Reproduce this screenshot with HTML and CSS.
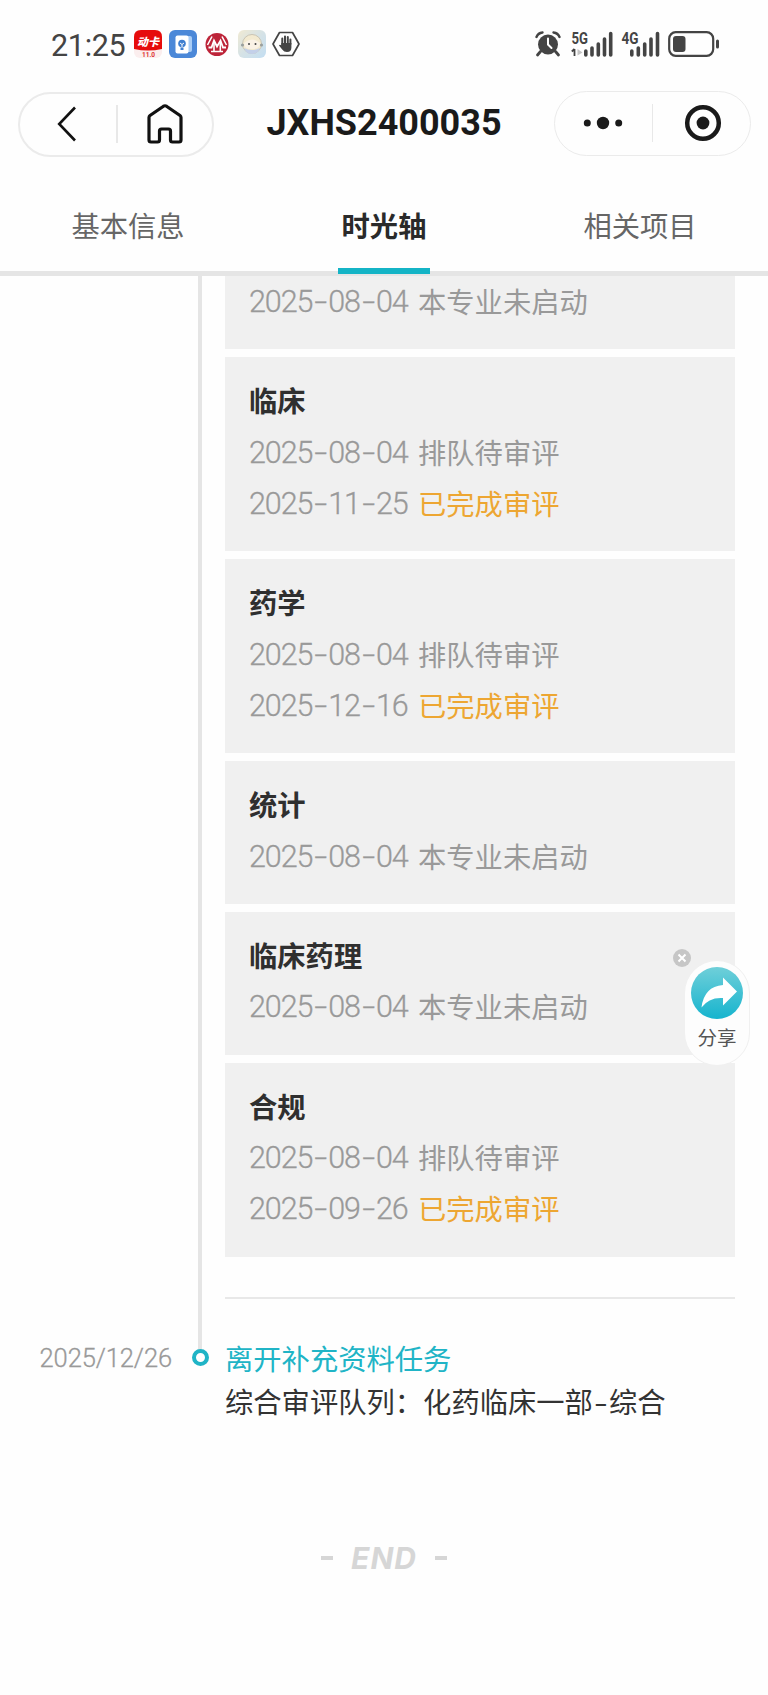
FILE: index.html
```
<!DOCTYPE html>
<html lang="zh-CN">
  <head>
    <meta charset="UTF-8" />
    <meta name="viewport" content="width=device-width, initial-scale=1.0" />
    <title>JXHS2400035</title>
    <link rel="stylesheet" href="styles.css" />
  </head>
  <body>
    <div class="status-bar">
      <div class="status-left">
        <span class="time">21:25</span>
        <svg class="app-icon" width="28" height="28" viewBox="0 0 28 28">
          <rect width="28" height="28" rx="6" fill="#fbeeee" />
          <path d="M0 19V7Q0 0 7 0H21Q28 0 28 7V19Q14 22 0 19Z" fill="#e60c0c" />
          <text class="card-name" x="14" y="15.5" text-anchor="middle">动卡</text>
          <text class="card-version" x="14.5" y="26.5" text-anchor="middle">11.0</text>
        </svg>
        <svg class="app-icon" width="28" height="28" viewBox="0 0 28 28">
          <rect width="28" height="28" rx="6" fill="#4b88d8" />
          <rect x="11" y="6" width="12" height="16" rx="2" fill="#a9cdf6" />
          <rect x="6.500" y="5.500" width="13" height="18" rx="2" fill="#fff" />
          <circle cx="13" cy="13.500" r="3.800" fill="#3f7fd0" />
          <path d="M11.500 17.500h3v2.500h-3z" fill="#3f7fd0" />
          <path d="M11 13l2 1.500 2-1.500M13 14.500V17" stroke="#fff" fill="none" />
        </svg>
        <svg class="app-icon" width="28" height="28" viewBox="0 0 28 28">
          <circle cx="14" cy="14.500" r="11.500" fill="#bd2439" />
          <path d="M5.500 17.500H8.500L11 10.500 14 16.500 17.500 10.500 20 17.500H23" fill="none" stroke="#fff" stroke-width="1.800" />
          <path d="M9 6.500L4.500 15M19 6.500L23.500 15M11 12.500V21.500M17.300 12.500V21.500M8 21.500h12" fill="none" stroke="#fff" stroke-width="1.600" />
        </svg>
        <svg class="app-icon" width="28" height="28" viewBox="0 0 28 28">
          <defs>
            <linearGradient id="faceBg" x1="0" y1="0" x2="1" y2="1">
              <stop offset="0" stop-color="#f1ead2" />
              <stop offset="0.500" stop-color="#d5e2e6" />
              <stop offset="1" stop-color="#c3def2" />
            </linearGradient>
          </defs>
          <rect width="28" height="28" rx="6" fill="url(#faceBg)" />
          <circle cx="14" cy="14" r="9.500" fill="#f3ead0" stroke="#c2bba9" stroke-width="0.800" />
          <circle cx="4.500" cy="15" r="1.600" fill="#9ba09e" />
          <circle cx="23.500" cy="15" r="1.600" fill="#9ba09e" />
          <path d="M6 13Q14 6 22 13Q22 19 14 19T6 13Z" fill="#faf2e6" />
          <path d="M6 18q8 4 16 0-2 6-8 6t-8-6z" fill="#c3d0e9" />
          <circle cx="11" cy="14" r="1" fill="#444" />
          <circle cx="17.500" cy="14" r="1" fill="#444" />
        </svg>
        <svg class="app-icon" width="28" height="28" viewBox="0 0 28 28">
          <path d="M7.500 2.500h13L27 14l-6.500 11.500h-13L1 14z" fill="none" stroke="#444" stroke-width="1.700" stroke-linejoin="round" />
          <path d="M10.300 15V8.500M13 13V6.500M15.800 13V7M18.400 14V9.500" stroke="#444" stroke-width="2" stroke-linecap="round" />
          <path d="M9.300 13h10.100v4.500q0 4.500-4.400 4.500-3 0-4.800-2.500L7 15.500q.500-1.500 2.300-.300z" fill="#444" />
        </svg>
      </div>
      <div class="status-right">
        <svg class="alarm" width="26" height="26" viewBox="0 0 26 26">
          <circle cx="13" cy="13.500" r="10" fill="#444" />
          <path d="M1.500 6Q3 2 7.500 1.500M18.500 1.500Q23 2 24.500 6" fill="none" stroke="#444" stroke-width="2.400" stroke-linecap="round" />
          <path d="M5.500 20.500L2.500 24M20.500 20.500l3 3.500" stroke="#444" stroke-width="2.800" stroke-linecap="round" />
          <path d="M13 7.500V13.500l3.500 3.500" fill="none" stroke="#fff" stroke-width="2" stroke-linecap="round" />
        </svg>
        <svg class="signal" width="42" height="30" viewBox="0 -4 42 30">
          <text x="0.500" y="12.500" textLength="16.500" lengthAdjust="spacingAndGlyphs">5G</text>
          <path d="M3.500 18v7M.800 20.500l2.700-2.500" stroke="#444" stroke-width="1.800" />
          <path d="M6.500 18l5 3.500-5 3z" fill="#c4c4c4" />
          <path d="M14.800 20v4M21 17v7M27.300 13v11M33.500 8V24M39.700 2.500v21.500" stroke="#444" stroke-width="3.600" stroke-linecap="round" />
        </svg>
        <svg class="signal" width="39" height="30" viewBox="0 -4 39 30">
          <text x="0.500" y="12.500" textLength="17" lengthAdjust="spacingAndGlyphs">4G</text>
          <path d="M10.800 20v4M17.300 17v7M23.700 13v11M30 8V24M36.500 2.500v21.500" stroke="#444" stroke-width="3.600" stroke-linecap="round" />
        </svg>
        <svg width="52" height="26" viewBox="0 0 52 26">
          <rect x="1.200" y="1.200" width="44" height="23.600" rx="6.500" fill="none" stroke="#444" stroke-width="2.200" />
          <rect x="5" y="5" width="12.500" height="16" rx="3" fill="#444" />
          <path d="M49.500 10v6" stroke="#444" stroke-width="3" stroke-linecap="round" />
        </svg>
      </div>
    </div>

    <div class="nav-bar">
      <div class="capsule capsule-left">
        <svg width="20" height="36" viewBox="0 0 20 36">
          <path d="M18 1.500L2.200 18 18 34.500" fill="none" stroke="#111" stroke-width="2.600" />
        </svg>
        <span class="capsule-line"></span>
        <svg width="38" height="40" viewBox="0 0 38 40">
          <path d="M3 13.500Q3 12.300 4 11.500L17.500 2.200Q19 1.300 20.500 2.200L34 11.500Q35 12.300 35 13.500V36Q35 38 33 38H26.500Q24.500 38 24.500 36V27Q24.500 25 22.500 25H15.500Q13.500 25 13.500 27V36Q13.500 38 11.500 38H5Q3 38 3 36Z" fill="none" stroke="#111" stroke-width="3.200" stroke-linejoin="round" />
        </svg>
      </div>
      <h1>JXHS2400035</h1>
      <div class="capsule capsule-right">
        <svg width="40" height="14" viewBox="0 0 40 14">
          <circle cx="4.300" cy="7" r="3.500" fill="#1a1a1a" />
          <circle cx="20" cy="7" r="6.200" fill="#1a1a1a" />
          <circle cx="35.700" cy="7" r="3.500" fill="#1a1a1a" />
        </svg>
        <span class="capsule-line"></span>
        <svg width="38" height="38" viewBox="0 0 38 38">
          <circle cx="19" cy="19" r="15.800" fill="none" stroke="#1a1a1a" stroke-width="4.500" />
          <circle cx="19" cy="19" r="6.400" fill="#1a1a1a" />
        </svg>
      </div>
    </div>

    <div class="tabs">
      <div class="tab">基本信息</div>
      <div class="tab active">时光轴</div>
      <div class="tab">相关项目</div>
    </div>

    <div class="timeline">
      <div class="timeline-item">
        <div class="item-date"></div>
        <div class="item-axis"></div>
        <div class="item-body">
          <div class="card card-cut">
            <p><span class="date">2025<i>-</i>08<i>-</i>04</span>本专业未启动</p>
          </div>
          <div class="card">
            <h2>临床</h2>
            <p><span class="date">2025<i>-</i>08<i>-</i>04</span>排队待审评</p>
            <p><span class="date">2025<i>-</i>11<i>-</i>25</span><span class="done">已完成审评</span></p>
          </div>
          <div class="card">
            <h2>药学</h2>
            <p><span class="date">2025<i>-</i>08<i>-</i>04</span>排队待审评</p>
            <p><span class="date">2025<i>-</i>12<i>-</i>16</span><span class="done">已完成审评</span></p>
          </div>
          <div class="card">
            <h2>统计</h2>
            <p><span class="date">2025<i>-</i>08<i>-</i>04</span>本专业未启动</p>
          </div>
          <div class="card">
            <h2>临床药理</h2>
            <p><span class="date">2025<i>-</i>08<i>-</i>04</span>本专业未启动</p>
          </div>
          <div class="card">
            <h2>合规</h2>
            <p><span class="date">2025<i>-</i>08<i>-</i>04</span>排队待审评</p>
            <p><span class="date">2025<i>-</i>09<i>-</i>26</span><span class="done">已完成审评</span></p>
          </div>
          <hr />
        </div>
      </div>
      <div class="timeline-item last">
        <div class="item-date">2025/12/26</div>
        <div class="item-axis"><span class="dot"></span></div>
        <div class="item-body">
          <h3>离开补充资料任务</h3>
          <p class="queue">综合审评队列：化药临床一部<i>-</i>综合</p>
        </div>
      </div>
    </div>

    <div class="end"><span class="end-dash"></span>END<span class="end-dash"></span></div>

    <div class="share">
      <svg class="share-close" width="18" height="18" viewBox="0 0 18 18">
        <circle cx="9" cy="9" r="9" fill="#c6c6c6" />
        <path d="M5.500 5.500l7 7M12.500 5.500l-7 7" stroke="#fff" stroke-width="2" />
      </svg>
      <svg width="52" height="52" viewBox="0 0 52 52">
        <defs>
          <linearGradient id="shareBg" x1="0" y1="0" x2="0" y2="1">
            <stop offset="0" stop-color="#6fcfd9" />
            <stop offset="1" stop-color="#16b4ce" />
          </linearGradient>
        </defs>
        <circle cx="26" cy="26" r="26" fill="url(#shareBg)" />
        <path d="M32 10.500L46 24.500 32 38.500V31Q18 30 10.500 40.500Q13 19.500 32 18Z" fill="#fff" />
      </svg>
      <span>分享</span>
    </div>
  </body>
</html>
```

FILE: styles.css
```
* {
  box-sizing: border-box;
}
body {
  position: relative;
  margin: 0;
  height: 1695px;
  overflow: hidden;
  background-color: #fefefe;
  color: #333;
  font-family: "Noto Sans CJK SC", sans-serif;
  font-size: 28.3px;
}
h1,
h2,
h3,
p {
  margin: 0;
}
svg {
  display: block;
  flex: none;
}

/* status bar */
.status-bar {
  display: flex;
  justify-content: space-between;
  align-items: center;
  height: 88px;
  padding: 0 48px 0 51px;
}
.status-left,
.status-right {
  display: flex;
  align-items: center;
}
.status-left {
  gap: 6.500px;
}
.status-right {
  gap: 8px;
}
.alarm {
  margin-right: 2px;
}
.time {
  width: 76.500px;
  margin-top: 2px;
  color: #444;
  font-family: Roboto, sans-serif;
  font-size: 30.500px;
  letter-spacing: -0.300px;
}
.card-name {
  fill: #fff;
  font-size: 11px;
  font-weight: 900;
  font-style: italic;
}
.card-version {
  fill: #d33;
  font-family: Roboto, sans-serif;
  font-size: 6.500px;
  font-weight: 700;
}
.signal {
  margin-top: -4px;
}
.signal text {
  fill: #444;
  font-family: Roboto, sans-serif;
  font-size: 17px;
  font-weight: 700;
}

/* title bar */
.nav-bar {
  display: flex;
  justify-content: space-between;
  align-items: center;
  height: 72px;
  padding: 0 17px 0 18px;
}
.nav-bar h1 {
  color: #1a1a1a;
  font-family: Roboto, sans-serif;
  font-size: 36px;
  font-weight: 700;
  line-height: 72px;
  margin-top: -3px;
}
.capsule {
  display: flex;
  align-items: center;
  height: 65px;
  border: 2px solid #ebebeb;
  border-radius: 33px;
}
.capsule-left {
  width: 196px;
  padding-left: 37px;
}
.capsule-right {
  width: 197px;
  border-width: 1px;
  padding-left: 28px;
  margin-top: -2px;
}
.capsule-line {
  width: 2px;
  height: 38px;
  background-color: #e8e8e8;
}
.capsule-left .capsule-line {
  margin: 0 28px 0 39px;
}
.capsule-right .capsule-line {
  width: 1px;
  margin: 0 31px 0 29px;
}

/* tabs */
.tabs {
  display: flex;
  height: 116px;
  border-bottom: 5px solid #e5e5e5;
}
.tab {
  position: relative;
  flex: 1;
  color: #666;
  line-height: 130px;
  text-align: center;
}
.tab.active {
  color: #2a2a2a;
  font-weight: 700;
}
.tab.active::after {
  content: "";
  position: absolute;
  left: 50%;
  bottom: -3px;
  width: 92px;
  height: 6px;
  margin-left: -46px;
  background-color: #14b4c6;
}

/* timeline */
.timeline-item {
  display: grid;
  grid-template-columns: 198px 4px 510px;
}
.timeline-item .item-body {
  margin-left: 23px;
  width: 510px;
}
.item-axis {
  background-color: #e5e5e5;
}
.card {
  margin-bottom: 8.400px;
  padding: 17px 24px 23px;
  background-color: #f0f0f0;
  line-height: 51.200px;
}
.card-cut {
  padding-top: 0;
  height: 73px;
  line-height: 50px;
}
.card h2 {
  font-size: 28.300px;
  font-weight: 700;
  color: #2f2f2f;
}
.card p {
  display: flex;
  color: #999;
}
.date {
  width: 169px;
  padding-top: 1px;
  margin-bottom: -1px;
  font-family: Roboto, sans-serif;
  font-size: 30.500px;
  font-weight: 300;
  letter-spacing: -1.100px;
  -webkit-text-stroke: 0.300px #999;
}
.date i {
  display: inline-block;
  width: 16px;
  font-style: normal;
  text-align: center;
  transform: scaleX(1.5);
}
.done {
  color: #eda632;
}
hr {
  height: 2px;
  margin: 40px 0 0;
  border: none;
  background-color: #e8e8e8;
}
.timeline-item > .item-body:has(hr) {
  padding-bottom: 37px;
}
.last .item-axis {
  background: linear-gradient(#e5e5e5, #e5e5e5) no-repeat 0 0 / 4px 16px;
}
.last .item-date {
  padding: 2px 26px 0 0;
  color: #999;
  font-family: Roboto, sans-serif;
  font-size: 25.500px;
  font-weight: 300;
  letter-spacing: -0.100px;
  line-height: 40px;
  text-align: right;
  white-space: nowrap;
  -webkit-text-stroke: 0.300px #999;
}
.dot {
  display: block;
  width: 17px;
  height: 17px;
  margin: 13px 0 0 -6.500px;
  border: 4px solid #20b4c6;
  border-radius: 50%;
  background-color: #fff;
}
.last h3 {
  color: #20b4c6;
  font-size: 28.300px;
  font-weight: 400;
  line-height: 43px;
}
.queue {
  line-height: 43px;
  white-space: nowrap;
}
.queue i {
  display: inline-block;
  width: 16px;
  font-style: normal;
  text-align: center;
  transform: scaleX(1.4);
}

.end {
  display: flex;
  justify-content: center;
  align-items: center;
  gap: 18px;
  margin-top: 116px;
  color: #d6d6d6;
  font-family: Inter, sans-serif;
  font-size: 30px;
  font-style: italic;
  font-weight: 700;
  letter-spacing: 1px;
  line-height: 40px;
}
.end-dash {
  width: 12px;
  height: 4px;
  background-color: #d6d6d6;
}

/* floating share button */
.share {
  position: absolute;
  top: 960px;
  left: 684px;
  display: flex;
  flex-direction: column;
  align-items: center;
  width: 66px;
  height: 106px;
  padding-top: 6px;
  border: 1px solid #f0f0f0;
  border-radius: 34px;
  background-color: #fdfdfd;
  color: #555;
  font-size: 19.500px;
  line-height: 35px;
}
.share-close {
  position: absolute;
  top: -12px;
  left: -12px;
}
```
